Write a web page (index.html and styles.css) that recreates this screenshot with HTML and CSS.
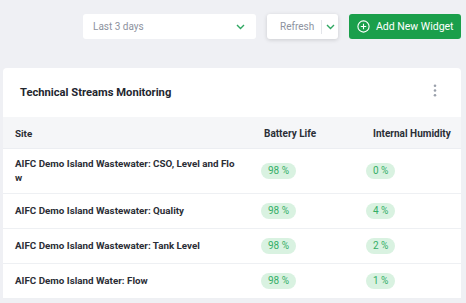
FILE: index.html
```html
<!DOCTYPE html>
<html lang="en">
<head>
  <meta charset="UTF-8">
  <meta name="viewport" content="width=device-width, initial-scale=1.0">
  <title>Technical Streams Monitoring</title>
  <link rel="stylesheet" href="styles.css">
</head>
<body>
  <div class="toolbar">
    <div class="range-select">
      <span>Last 3 days</span>
      <svg class="chev" width="9" height="6" viewBox="0 0 9 6"><path d="M1 1l3.5 3.5L8 1" fill="none" stroke="#2fa862" stroke-width="1.4"/></svg>
    </div>
    <div class="refresh">
      <span class="refresh-label">Refresh</span>
      <span class="refresh-sep"></span>
      <svg class="chev" width="9" height="6" viewBox="0 0 9 6"><path d="M1 1l3.5 3.5L8 1" fill="none" stroke="#2fa862" stroke-width="1.4"/></svg>
    </div>
    <div class="add-btn">
      <svg width="13" height="13" viewBox="0 0 13 13"><circle cx="6.5" cy="6.5" r="5.6" fill="none" stroke="#fff" stroke-width="1.1"/><path d="M6.5 3.8v5.4M3.8 6.5h5.4" stroke="#fff" stroke-width="1.1"/></svg>
      <span>Add New Widget</span>
    </div>
  </div>

  <div class="card">
    <div class="card-head">
      <span class="card-title">Technical Streams Monitoring</span>
      <svg class="kebab" width="4" height="13" viewBox="0 0 4 13"><circle cx="2" cy="1.8" r="1.3" fill="#9aa0ab"/><circle cx="2" cy="6.5" r="1.3" fill="#9aa0ab"/><circle cx="2" cy="11.2" r="1.3" fill="#9aa0ab"/></svg>
    </div>
    <div class="table">
      <div class="thead">
        <div class="th site">Site</div>
        <div class="th batt">Battery Life</div>
        <div class="th hum">Internal Humidity</div>
      </div>
      <div class="tr">
        <div class="site">AIFC Demo Island Wastewater: CSO, Level and Flow</div>
        <div class="batt"><span class="badge">98 %</span></div>
        <div class="hum"><span class="badge">0 %</span></div>
      </div>
      <div class="tr">
        <div class="site">AIFC Demo Island Wastewater: Quality</div>
        <div class="batt"><span class="badge">98 %</span></div>
        <div class="hum"><span class="badge">4 %</span></div>
      </div>
      <div class="tr">
        <div class="site">AIFC Demo Island Wastewater: Tank Level</div>
        <div class="batt"><span class="badge">98 %</span></div>
        <div class="hum"><span class="badge">2 %</span></div>
      </div>
      <div class="tr">
        <div class="site">AIFC Demo Island Water: Flow</div>
        <div class="batt"><span class="badge">98 %</span></div>
        <div class="hum"><span class="badge">1 %</span></div>
      </div>
    </div>
  </div>
</body>
</html>
```

FILE: styles.css
```css
body {
  margin: 0;
  padding: 0;
  background-color: #eff0f4;
  font-family: Roboto, "Liberation Sans", Arial, sans-serif;
  overflow: hidden;
}

.toolbar {
  display: flex;
  justify-content: flex-end;
  gap: 11px;
  padding: 14px 5px 0 0;
  height: 25px;
}

.range-select {
  width: 173px;
  height: 25px;
  background-color: white;
  border-radius: 3px;
  display: flex;
  align-items: center;
  justify-content: space-between;
  padding: 0 11px 0 10px;
  box-sizing: border-box;
  font-size: 10px;
  color: #8d929e;
}

.refresh {
  width: 71px;
  height: 25px;
  background-color: white;
  border-radius: 3px;
  box-shadow: 0 1px 4px rgba(0, 0, 0, 0.15);
  display: flex;
  align-items: center;
  padding: 0 0 0 13px;
  box-sizing: border-box;
  font-size: 10px;
  color: #8d929e;
}

.refresh-sep {
  width: 1px;
  height: 14px;
  background-color: #e3e5ea;
  margin: 0 4px 0 7px;
}

.add-btn {
  width: 112px;
  height: 25px;
  background-color: #1a9f4b;
  border-radius: 3px;
  display: flex;
  align-items: center;
  gap: 6px;
  padding-left: 8px;
  box-sizing: border-box;
  color: white;
  font-size: 10.5px;
  white-space: nowrap;
}

.card {
  margin: 29px 5px 0 3px;
  background-color: white;
  border-radius: 4px 4px 0 0;
}

.card-head {
  height: 49px;
  display: flex;
  align-items: center;
  justify-content: space-between;
  padding: 0 24px 0 17px;
}

.card-title {
  font-size: 11.2px;
  font-weight: bold;
  color: #23262e;
}

.kebab {
  margin-top: -4px;
}

.thead, .tr {
  display: grid;
  grid-template-columns: 246px 110px 1fr;
  align-items: center;
}

.thead {
  height: 32px;
  background-color: #f5f6f8;
  border-bottom: 1px solid #eceef2;
  box-sizing: border-box;
  padding-top: 2px;
}

.th {
  font-size: 10px;
  font-weight: bold;
  color: #2b2e36;
}

.th.batt {
  padding-left: 15px;
}

.th.hum {
  padding-left: 14px;
}

.tr {
  min-height: 35px;
  padding: 8px 0;
  box-sizing: border-box;
  border-bottom: 1px solid #eef0f3;
}

.site {
  padding-left: 12px;
  padding-right: 14px;
  font-size: 9.8px;
  font-weight: bold;
  line-height: 14px;
  color: #2b2e36;
  word-break: break-all;
}

.batt, .hum {
  display: flex;
}

.batt {
  padding-left: 12px;
}

.hum {
  padding-left: 7px;
}

.badge {
  height: 16px;
  line-height: 16px;
  padding: 0 7px;
  border-radius: 8px;
  background-color: #d9f2e1;
  color: #34ae66;
  font-size: 10px;
}
```
